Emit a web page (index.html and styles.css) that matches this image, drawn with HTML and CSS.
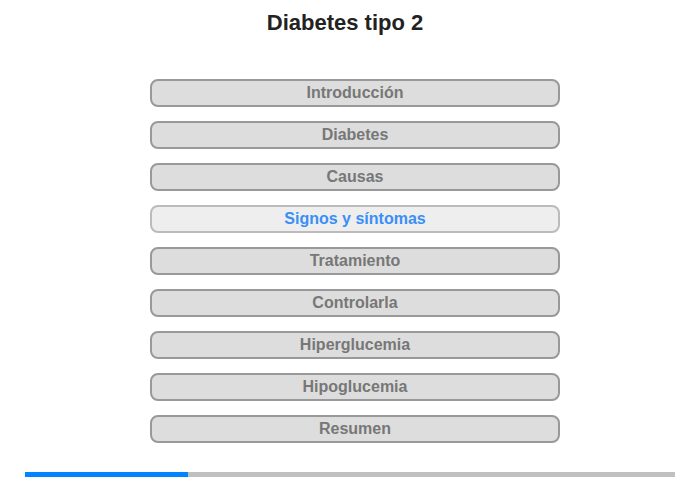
FILE: index.html
```html
<!DOCTYPE html>
<html lang="es">
<head>
    <meta charset="UTF-8">
    <title>Diabetes tipo 2</title>
    <link rel="stylesheet" href="styles.css">
</head>
<body>
<div class="lesson">
    <h1>Diabetes tipo 2</h1>
    <ul class="menu">
        <li>Introducción</li>
        <li>Diabetes</li>
        <li>Causas</li>
        <li class="active">Signos y síntomas</li>
        <li>Tratamiento</li>
        <li>Controlarla</li>
        <li>Hiperglucemia</li>
        <li>Hipoglucemia</li>
        <li>Resumen</li>
    </ul>
    <div class="progress">
        <div style="width: 25%"></div>
    </div>
</div>
</body>
</html>
```

FILE: styles.css
```css
body {
    margin: 0;
    font-family: 'Liberation Sans', Arial, sans-serif;
    background: #fff;
}
.lesson {
    width: 700px;
    height: 480px;
    display: flex;
    flex-direction: column;
}
.lesson h1 {
    margin: 10px 10px 0 0;
    font-size: 22px;
    line-height: 26px;
    text-align: center;
    color: #222;
}
.menu {
    list-style: none;
    margin: 43px 0 0 150px;
    padding: 0;
    width: 410px;
    display: flex;
    flex-direction: column;
    gap: 14px;
}
.menu li {
    box-sizing: border-box;
    height: 28px;
    line-height: 24px;
    border: 2px solid #999;
    border-radius: 8px;
    background: #ddd;
    color: #777;
    font-size: 16px;
    font-weight: bold;
    text-align: center;
}
.menu li.active {
    background: #eee;
    border-color: #bbb;
    color: #3a8ef6;
}
.progress {
    margin: 29px 25px 0;
    height: 5px;
    background: #c0c0c0;
}
.progress div {
    height: 100%;
    background: #0084ff;
}
```
